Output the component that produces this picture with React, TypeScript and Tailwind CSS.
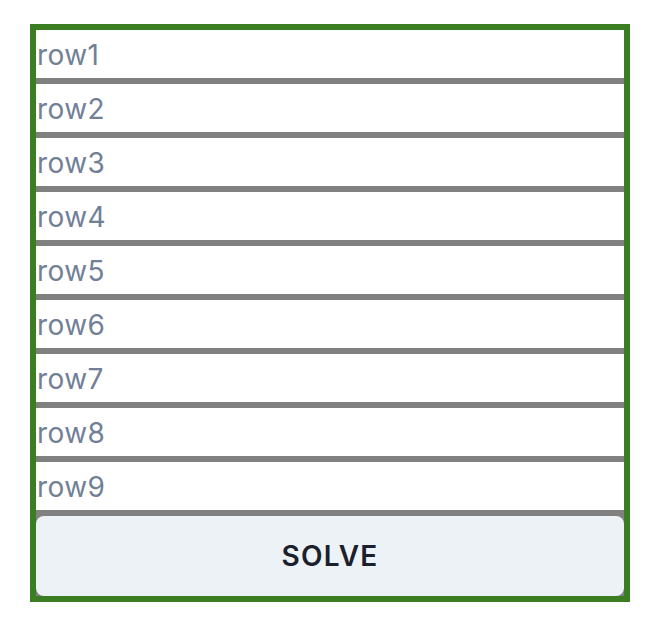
import React from "react";

export default function App() {
  const rows = ["row1", "row2", "row3", "row4", "row5", "row6", "row7", "row8", "row9"];
  return (
    <div className="min-h-screen bg-white pt-[24px] pl-[30px]" style={{ fontFamily: "Inter, 'Noto Sans', sans-serif" }}>
      <div className="w-[600px] border-[6px] border-[#3a7d22] bg-[#808080] flex flex-col gap-[6px]">
        {rows.map((r) => (
          <input
            key={r}
            placeholder={r}
            className="h-[48px] w-full bg-white pl-[1px] pt-[2px] text-[28px] tracking-[0.4px] text-[#2d3748] placeholder:text-[#718096] outline-none"
            style={{ fontFamily: "Inter, 'Noto Sans', sans-serif" }}
          />
        ))}
        <button className="h-[80px] w-full rounded-[8px] bg-[#edf2f7] text-[28px] font-semibold text-[#1a202c] tracking-[1.2px]">
          SOLVE
        </button>
      </div>
    </div>
  );
}
